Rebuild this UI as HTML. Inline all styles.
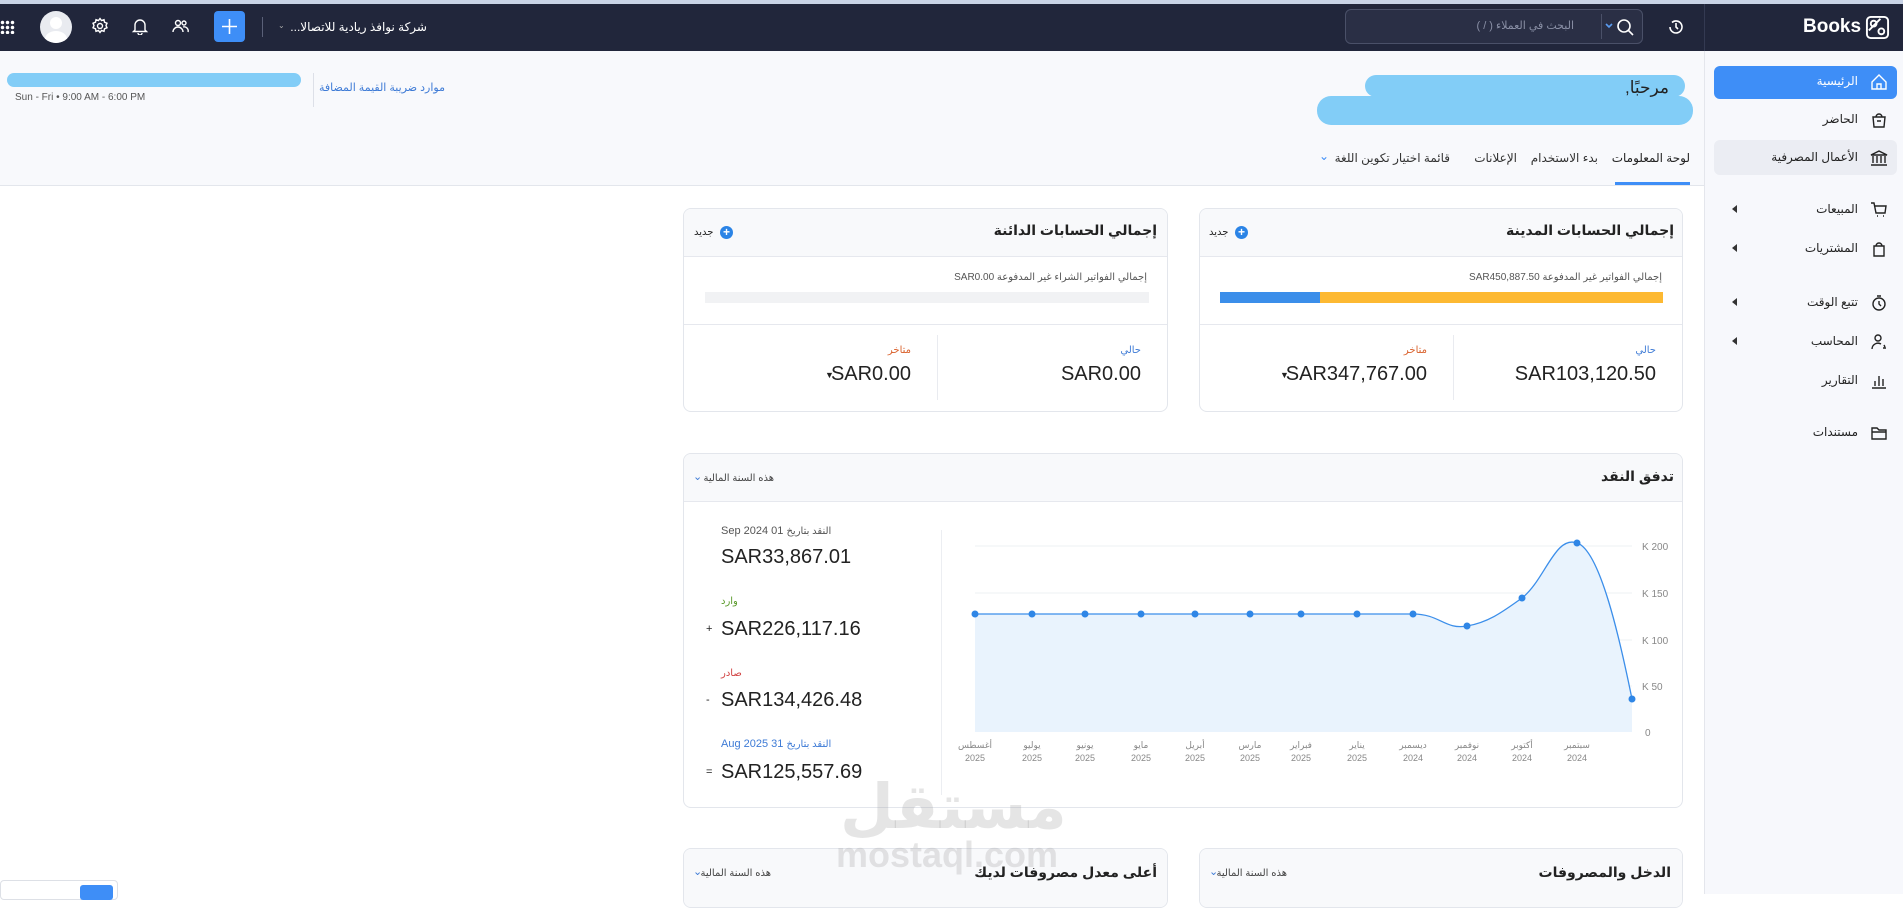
<!DOCTYPE html>
<html><head><meta charset="utf-8"><style>
*{margin:0;padding:0;box-sizing:border-box}
body{width:1903px;height:894px;overflow:hidden;background:#fff;font-family:"Liberation Sans","DejaVu Sans",sans-serif;color:#222;position:relative}
.a{position:absolute;white-space:nowrap}
.r{direction:rtl}
.card{position:absolute;border:1px solid #e3e6ec;border-radius:8px;background:#fff;overflow:hidden}
.ch{position:absolute;left:0;right:0;top:0;background:#f8f9fb;border-bottom:1px solid #e6e8ee}
.side div.it{position:absolute;right:45px;font-size:12px;direction:rtl;color:#222}
.arr{position:absolute;left:27px;width:0;height:0;border-top:4px solid transparent;border-bottom:4px solid transparent;border-right:5px solid #333}
.plus{position:absolute;width:13px;height:13px;border-radius:50%;background:#2b84e6;color:#fff;font-size:12px;line-height:13px;text-align:center;font-weight:bold}
</style></head><body>
<!-- top bar -->
<div class="a" style="left:0;top:0;width:1903px;height:4px;background:#c9d3e6"></div>
<div class="a" style="left:0;top:4px;width:1903px;height:47px;background:#21263b"></div>
<div class="a" style="left:1704px;top:4px;width:1px;height:47px;background:#343a52"></div>
<div class="a" style="left:1803px;top:16px;font-size:19px;color:#fff;font-weight:bold">Books</div>
<svg class="a" style="left:1865px;top:15px" width="25" height="25" viewBox="0 0 26 26" fill="none" stroke="#fff" stroke-width="2"><rect x="2" y="2" width="22" height="22" rx="4"/><circle cx="9" cy="9" r="3"/><circle cx="17" cy="17" r="3"/><path d="M16 4 L4 16"/></svg>
<div class="a" style="left:1345px;top:9px;width:298px;height:35px;border:1px solid #4a5068;border-radius:6px;background:#2a2f45"></div>
<div class="a r" style="right:329px;top:19px;font-size:11px;color:#8a90a6">البحث في العملاء ( / )</div>
<div class="a" style="left:1601px;top:14px;width:1px;height:25px;background:#4a5068"></div>
<svg class="a" style="left:1604px;top:16px" width="34" height="22" fill="none" stroke="#fff" stroke-width="1.6"><path d="M2 8 l3 3 l3-3" stroke="#5a9cf0"/><circle cx="20" cy="10" r="6"/><path d="M24.5 14.5 L29 19"/></svg>
<svg class="a" style="left:1667px;top:18px" width="18" height="18" fill="none" stroke="#fff" stroke-width="1.6"><path d="M3 9 a6 6 0 1 0 2-4.5"/><path d="M9 5 v4 l2 2"/></svg>
<div class="a" style="left:0;top:20px;width:15px;height:14px;background:radial-gradient(circle,#fff 1.5px,transparent 2px) 0 0/5px 5px"></div>
<div class="a" style="left:40px;top:11px;width:32px;height:32px;border-radius:50%;background:#e9ebf0;overflow:hidden"><div style="position:absolute;left:10px;top:6px;width:12px;height:12px;border-radius:50%;background:#fff"></div><div style="position:absolute;left:5px;top:20px;width:22px;height:16px;border-radius:50%;background:#fff"></div></div>
<svg class="a" style="left:91px;top:17px" width="18" height="18" fill="none" stroke="#fff" stroke-width="1.4"><circle cx="9" cy="9" r="2.5"/><path d="M9 1.5 l1.5 2 2.5-.8.5 2.5 2.5 1-1 2.3 1 2.3-2.5 1-.5 2.5-2.5-.8-1.5 2-1.5-2-2.5.8-.5-2.5-2.5-1 1-2.3-1-2.3 2.5-1 .5-2.5 2.5.8z"/></svg>
<svg class="a" style="left:131px;top:17px" width="18" height="18" fill="none" stroke="#fff" stroke-width="1.4"><path d="M4 13 V8 a5 5 0 0 1 10 0 v5 l1.5 1.5 h-13z M7 16 a2 2 0 0 0 4 0"/></svg>
<svg class="a" style="left:171px;top:17px" width="18" height="18" fill="none" stroke="#fff" stroke-width="1.4"><circle cx="7" cy="6" r="2.5"/><circle cx="13" cy="6" r="2"/><path d="M2 15 a5 5 0 0 1 10 0 M12 10 a4 4 0 0 1 5 5"/></svg>
<div class="a" style="left:214px;top:11px;width:31px;height:31px;border-radius:4px;background:#3e8ef7"></div>
<svg class="a" style="left:221px;top:18px" width="17" height="17" stroke="#fff" stroke-width="1.6"><path d="M8.5 1 V16 M1 8.5 H16"/></svg>
<div class="a" style="left:262px;top:17px;width:1px;height:20px;background:#5a6078"></div>
<div class="a" style="left:278px;top:21px;font-size:8px;color:#aaa">⌄</div>
<div class="a r" style="right:1476px;top:20px;font-size:12px;color:#fff">شركة نوافذ ريادية للاتصالا...</div>
<!-- sidebar -->
<div class="a side" style="left:1704px;top:51px;width:199px;height:843px;background:#f7f8fc;border-left:1px solid #e4e6ec">
<div class="a" style="left:9px;top:15px;width:183px;height:33px;border-radius:6px;background:#3e8ef7"></div>
<div class="a" style="left:9px;top:89px;width:183px;height:35px;border-radius:6px;background:#ebedf3"></div>
<div class="it" style="top:23px;color:#fff">الرئيسية</div>
<div class="it" style="top:61px">الحاضر</div>
<div class="it" style="top:99px">الأعمال المصرفية</div>
<div class="it" style="top:151px">المبيعات</div>
<div class="it" style="top:190px">المشتريات</div>
<div class="it" style="top:244px">تتبع الوقت</div>
<div class="it" style="top:283px">المحاسب</div>
<div class="it" style="top:322px">التقارير</div>
<div class="it" style="top:374px">مستندات</div>
<div class="arr" style="top:154px"></div><div class="arr" style="top:193px"></div><div class="arr" style="top:247px"></div><div class="arr" style="top:286px"></div>
<svg class="a" style="left:165px;top:22px" width="18" height="380" fill="none" stroke="#222" stroke-width="1.4">
<path d="M2 9 L9 2 L16 9 V16 H2Z M7 16 V11 H11 V16" stroke="#fff"/>
<g transform="translate(0,38)"><path d="M3 6 H15 L14 16 H4Z M6 6 a3 3 0 0 1 6 0 M7 10 H11"/></g>
<g transform="translate(0,76)"><path d="M1 6 L9 2 L17 6 Z M3 7 V14 M7 7 V14 M11 7 V14 M15 7 V14 M1 16 H17"/></g>
<g transform="translate(0,128)"><path d="M1 2 H4 L6 12 H15 L16 5 H5 M7 15 h1 M13 15 h1"/></g>
<g transform="translate(0,167)"><path d="M4 6 H14 V16 H4Z M6 6 a3 3 0 0 1 6 0"/></g>
<g transform="translate(0,221)"><circle cx="9" cy="10" r="6"/><path d="M7 2 H11 M9 7 V10 L11 12"/></g>
<g transform="translate(0,260)"><circle cx="8" cy="5" r="3"/><path d="M2 16 a6 6 0 0 1 9-5 M14 12 l1 2 M13 15 h3"/></g>
<g transform="translate(0,299)"><path d="M2 16 H16 M5 14 V9 M9 14 V4 M13 14 V7"/></g>
<g transform="translate(0,351)"><path d="M2 4 H7 L9 6 H16 V15 H2Z M2 8 H16"/></g>
</svg>
</div>
<!-- header banner -->
<div class="a" style="left:0;top:51px;width:1704px;height:135px;background:#f8f9fc;border-bottom:1px solid #e3e6ec"></div>
<div class="a" style="left:1365px;top:75px;width:320px;height:22px;border-radius:11px;background:#82cdf7"></div>
<div class="a" style="left:1317px;top:96px;width:376px;height:29px;border-radius:14px;background:#82cdf7"></div>
<div class="a r" style="right:234px;top:78px;font-size:17px;color:#222">مرحبًا,</div>
<div class="a r" style="right:213px;top:151px;font-size:12px;color:#222">لوحة المعلومات</div>
<div class="a" style="left:1615px;top:182px;width:75px;height:3px;background:#3e8ef7"></div>
<div class="a r" style="right:305px;top:151px;font-size:12px;color:#333">بدء الاستخدام</div>
<div class="a r" style="right:386px;top:151px;font-size:12px;color:#333">الإعلانات</div>
<div class="a r" style="right:453px;top:151px;font-size:12px;color:#333">قائمة اختيار تكوين اللغة</div>
<div class="a" style="left:1319px;top:149px;font-size:12px;color:#3e8ef7">⌄</div>
<div class="a" style="left:7px;top:73px;width:294px;height:14px;border-radius:7px;background:#82cdf7"></div>
<div class="a" style="left:15px;top:92px;font-size:10px;color:#555">Sun - Fri • 9:00 AM - 6:00 PM</div>
<div class="a" style="left:313px;top:73px;width:1px;height:34px;background:#dde0e8"></div>
<div class="a r" style="right:1458px;top:81px;font-size:11px;color:#3e7bd6">موارد ضريبة القيمة المضافة</div>
<!-- receivables card -->
<div class="card" style="left:1199px;top:208px;width:484px;height:204px">
<div class="ch" style="height:48px"></div>
<div class="a r" style="right:8px;top:13px;font-size:14px;font-weight:bold">إجمالي الحسابات المدينة</div>
<div class="a r" style="left:9px;top:18px;font-size:10px">جديد</div>
<div class="plus" style="left:35px;top:17px">+</div>
<div class="a r" style="right:20px;top:63px;font-size:10px;color:#555">إجمالي الفواتير غير المدفوعة SAR450,887.50</div>
<div class="a" style="left:20px;top:83px;width:100px;height:11px;background:#3b8eea"></div>
<div class="a" style="left:120px;top:83px;width:343px;height:11px;background:#fdb932"></div>
<div class="a" style="left:0;top:115px;width:484px;height:1px;background:#e6e8ee"></div>
<div class="a" style="left:253px;top:126px;width:1px;height:65px;background:#e9ebf0"></div>
<div class="a r" style="right:26px;top:136px;font-size:10px;color:#3e7bd6">حالي</div>
<div class="a" style="right:26px;top:154px;font-size:20px">SAR103,120.50</div>
<div class="a r" style="right:255px;top:136px;font-size:10px;color:#d9602b">متاخر</div>
<div class="a" style="right:255px;top:154px;font-size:20px">SAR347,767.00</div>
<div class="a" style="left:80px;top:161px;font-size:9px">▼</div>
</div>
<!-- payables card -->
<div class="card" style="left:683px;top:208px;width:485px;height:204px">
<div class="ch" style="height:48px"></div>
<div class="a r" style="right:10px;top:13px;font-size:14px;font-weight:bold">إجمالي الحسابات الدائنة</div>
<div class="a r" style="left:10px;top:18px;font-size:10px">جديد</div>
<div class="plus" style="left:36px;top:17px">+</div>
<div class="a r" style="right:20px;top:63px;font-size:10px;color:#555">إجمالي الفواتير الشراء غير المدفوعة SAR0.00</div>
<div class="a" style="left:21px;top:83px;width:444px;height:11px;background:#f1f2f4"></div>
<div class="a" style="left:0;top:115px;width:485px;height:1px;background:#e6e8ee"></div>
<div class="a" style="left:253px;top:126px;width:1px;height:65px;background:#e9ebf0"></div>
<div class="a r" style="right:26px;top:136px;font-size:10px;color:#3e7bd6">حالي</div>
<div class="a" style="right:26px;top:154px;font-size:20px">SAR0.00</div>
<div class="a r" style="right:256px;top:136px;font-size:10px;color:#d9602b">متاخر</div>
<div class="a" style="right:256px;top:154px;font-size:20px">SAR0.00</div>
<div class="a" style="left:141px;top:161px;font-size:9px">▼</div>
</div>
<!-- cash flow card -->
<div class="card" style="left:683px;top:453px;width:1000px;height:355px">
<div class="ch" style="height:48px"></div>
<div class="a r" style="right:8px;top:14px;font-size:14px;font-weight:bold">تدفق النقد</div>
<div class="a r" style="right:908px;top:19px;font-size:10px;color:#444">هذه السنة المالية</div>
<div class="a" style="left:9px;top:16px;font-size:11px;color:#3e7bd6">⌄</div>
</div>
<div class="a" style="left:721px;top:525px;font-size:11px;color:#555">Sep 2024 01 <span style="font-size:10px">النقد بتاريخ</span></div>
<div class="a" style="left:721px;top:546px;font-size:20px">SAR33,867.01</div>
<div class="a" style="left:721px;top:596px;font-size:10px;color:#5a9a2a">وارد</div>
<div class="a" style="left:706px;top:623px;font-size:11px">+</div>
<div class="a" style="left:721px;top:618px;font-size:20px">SAR226,117.16</div>
<div class="a" style="left:721px;top:668px;font-size:10px;color:#d04040">صادر</div>
<div class="a" style="left:706px;top:694px;font-size:11px">-</div>
<div class="a" style="left:721px;top:689px;font-size:20px">SAR134,426.48</div>
<div class="a" style="left:721px;top:738px;font-size:11px;color:#3e7bd6">Aug 2025 31 <span style="font-size:10px">النقد بتاريخ</span></div>
<div class="a" style="left:706px;top:766px;font-size:11px">=</div>
<div class="a" style="left:721px;top:761px;font-size:20px">SAR125,557.69</div>
<div class="a" style="left:941px;top:530px;width:1px;height:265px;background:#eceef2"></div>
<svg class="a" style="left:0;top:0" width="1903" height="894">
<g stroke="#eef0f3" stroke-width="1"><path d="M975 546 H1632 M975 593 H1632 M975 640 H1632 M975 686 H1632"/></g>
<path d="M975 614 L1413 614 C1440 614,1445 630,1467 626 C1490 622,1505 610,1522 598 C1545 580,1555 535,1577 543 C1600 550,1620 640,1632 699 L1632 732 L975 732Z" fill="#e9f3fd"/>
<path d="M975 614 L1413 614 C1440 614,1445 630,1467 626 C1490 622,1505 610,1522 598 C1545 580,1555 535,1577 543 C1600 550,1620 640,1632 699" fill="none" stroke="#3b8eea" stroke-width="1.3"/>
<g fill="#2f86e6"><circle cx="975" cy="614" r="3.5"/><circle cx="1032" cy="614" r="3.5"/><circle cx="1085" cy="614" r="3.5"/><circle cx="1141" cy="614" r="3.5"/><circle cx="1195" cy="614" r="3.5"/><circle cx="1250" cy="614" r="3.5"/><circle cx="1301" cy="614" r="3.5"/><circle cx="1357" cy="614" r="3.5"/><circle cx="1413" cy="614" r="3.5"/><circle cx="1467" cy="626" r="3.5"/><circle cx="1522" cy="598" r="3.5"/><circle cx="1577" cy="543" r="3.5"/><circle cx="1632" cy="699" r="3.5"/></g>
<g font-family="Liberation Sans, DejaVu Sans, sans-serif" font-size="10" fill="#888" text-anchor="start"><text x="1642" y="550">K 200</text><text x="1642" y="597">K 150</text><text x="1642" y="644">K 100</text><text x="1642" y="690">K 50</text><text x="1645" y="736">0</text></g>
<g font-family="Liberation Sans, DejaVu Sans, sans-serif" font-size="9" fill="#888" text-anchor="middle">
<text x="975" y="748">أغسطس</text><text x="975" y="761">2025</text>
<text x="1032" y="748">يوليو</text><text x="1032" y="761">2025</text>
<text x="1085" y="748">يونيو</text><text x="1085" y="761">2025</text>
<text x="1141" y="748">مايو</text><text x="1141" y="761">2025</text>
<text x="1195" y="748">أبريل</text><text x="1195" y="761">2025</text>
<text x="1250" y="748">مارس</text><text x="1250" y="761">2025</text>
<text x="1301" y="748">فبراير</text><text x="1301" y="761">2025</text>
<text x="1357" y="748">يناير</text><text x="1357" y="761">2025</text>
<text x="1413" y="748">ديسمبر</text><text x="1413" y="761">2024</text>
<text x="1467" y="748">نوفمبر</text><text x="1467" y="761">2024</text>
<text x="1522" y="748">أكتوبر</text><text x="1522" y="761">2024</text>
<text x="1577" y="748">سبتمبر</text><text x="1577" y="761">2024</text>
</g>
</svg>
<!-- bottom cards -->
<div class="card" style="left:1199px;top:848px;width:484px;height:60px"><div class="ch" style="height:60px;border:0"></div>
<div class="a r" style="right:11px;top:15px;font-size:14px;font-weight:bold">الدخل والمصروفات</div>
<div class="a r" style="right:395px;top:19px;font-size:10px;color:#444">هذه السنة المالية</div>
<div class="a" style="left:9px;top:16px;font-size:11px;color:#3e7bd6">⌄</div></div>
<div class="card" style="left:683px;top:848px;width:485px;height:60px"><div class="ch" style="height:60px;border:0"></div>
<div class="a r" style="right:10px;top:15px;font-size:14px;font-weight:bold">أعلى معدل مصروفات لديك</div>
<div class="a r" style="right:396px;top:19px;font-size:10px;color:#444">هذه السنة المالية</div>
<div class="a" style="left:9px;top:16px;font-size:11px;color:#3e7bd6">⌄</div></div>
<!-- watermark -->
<div class="a" style="left:840px;top:770px;font-size:62px;font-weight:bold;color:rgba(150,150,150,.25);font-family:'DejaVu Sans',sans-serif">مستقل</div>
<div class="a" style="left:836px;top:834px;font-size:36px;font-weight:bold;color:rgba(150,150,150,.25)">mostaql.com</div>
<div class="a" style="left:0;top:880px;width:118px;height:20px;border:1px solid #dde0e6;border-radius:4px;background:#fff"></div>
<div class="a" style="left:80px;top:885px;width:33px;height:15px;border-radius:3px;background:#3e8ef7"></div>
</body></html>
